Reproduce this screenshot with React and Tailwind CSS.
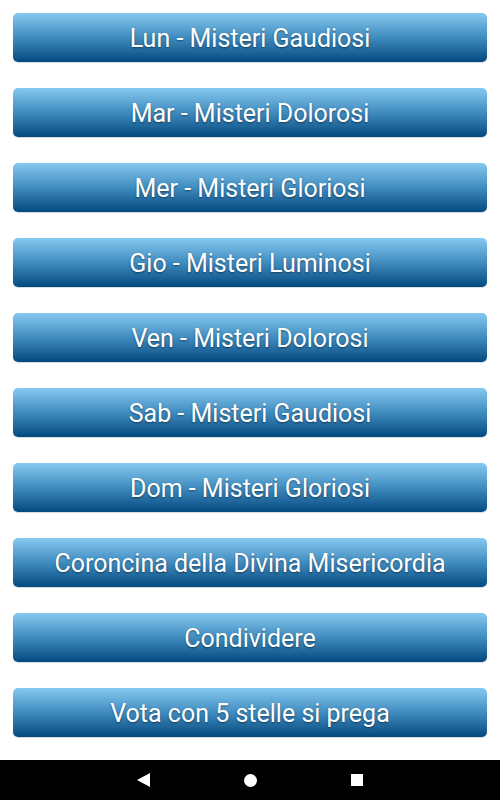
const items = [
  'Lun - Misteri Gaudiosi',
  'Mar - Misteri Dolorosi',
  'Mer - Misteri Gloriosi',
  'Gio - Misteri Luminosi',
  'Ven - Misteri Dolorosi',
  'Sab - Misteri Gaudiosi',
  'Dom - Misteri Gloriosi',
  'Coroncina della Divina Misericordia',
  'Condividere',
  'Vota con 5 stelle si prega',
]

export default function App() {
  return (
    <div className="h-[800px] w-[500px] bg-white flex flex-col font-['Roboto',sans-serif]">
      <div className="flex-1 flex flex-col gap-[26px] px-[13px] pt-[13px]">
        {items.map((label) => (
          <button
            key={label}
            className="h-[49px] w-full rounded-[5px] bg-gradient-to-b from-[#86c9f0] via-[#3f8cbf] to-[#004a80] text-white text-[25px] leading-none pt-[1px] [text-shadow:0_1px_2px_rgba(0,0,0,0.45)] shadow-[0_1px_1px_rgba(0,0,0,0.15)]"
          >
            {label}
          </button>
        ))}
      </div>
      <div className="h-[40px] bg-black flex items-center justify-center">
        <div className="flex items-center gap-[94px]">
          <svg width="13" height="14" viewBox="0 0 13 14">
            <path d="M13 0 L13 14 L0 7 Z" fill="white" />
          </svg>
          <div className="w-[13px] h-[13px] rounded-full bg-white" />
          <div className="w-[12px] h-[12px] bg-white" />
        </div>
      </div>
    </div>
  )
}
